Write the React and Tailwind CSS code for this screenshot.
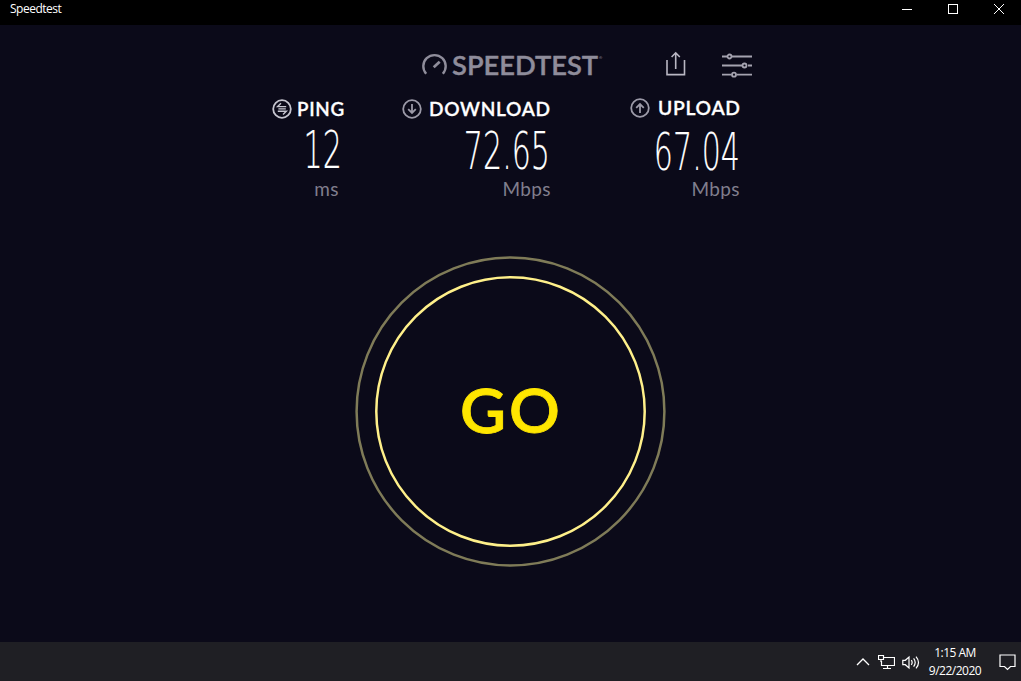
import React from 'react';

const stats = [
  {
    label: 'PING', value: '12', unit: 'ms', icon: 'ping',
    box: 'w-[72px]',
    gap: 'gap-[5px]',
    labelBox: 'w-[47px]',
    labelText: 'scale-x-[0.99]',
    valueText: 'pr-[2px] pt-[6px]',
    unitText: 'pr-[5px]',
    row: 'pt-px',
  },
  {
    label: 'DOWNLOAD', value: '72.65', unit: 'Mbps', icon: 'down',
    box: 'ml-[58px] w-[149px]',
    gap: 'gap-[7px]',
    labelBox: 'w-[121px]',
    labelText: 'scale-x-[1.005]',
    valueText: 'pr-px pt-[7px]',
    unitText: 'pr-0',
    row: 'pt-px',
  },
  {
    label: 'UPLOAD', value: '67.04', unit: 'Mbps', icon: 'up',
    box: 'ml-[79px] w-[110px]',
    gap: 'gap-[8px]',
    labelBox: 'w-[82px]',
    labelText: 'scale-x-[1.015]',
    valueText: 'pt-[8px]',
    unitText: '',
    row: 'pt-0',
  },
];

function StatIcon({ type }) {
  return (
    <svg
      className={`shrink-0 ${type === 'ping' ? 'text-[#c6c5cf]' : 'text-[#9c9aa8]'}`}
      width="20" height="20" viewBox="0 0 20 20" fill="none" stroke="currentColor" strokeWidth="1.8"
    >
      <circle cx="10" cy="10" r="8.8" />
      {type === 'ping' && <path d="M9 4.2 5.6 7.6h8.6M5.8 12.2h8.6L11 15.6M6.4 9.9h7.4" strokeWidth="1.4" />}
      {type === 'down' && <path d="M10 5v9M6.2 10.2 10 14l3.8-3.8" />}
      {type === 'up' && <path d="M10 15V6M6.2 9.8 10 6l3.8 3.8" />}
    </svg>
  );
}

function Stat({ stat }) {
  return (
    <div className={`flex flex-col ${stat.box}`}>
      <div className={`flex h-[22px] items-start ${stat.row}`}>
        <div className={`flex items-start ${stat.gap}`}>
          <StatIcon type={stat.icon} />
          <div className={`h-5 ${stat.labelBox}`}>
            <span className={`block w-max origin-left font-[Lato,sans-serif] text-[19px] leading-[19px] font-semibold tracking-[0.7px] text-white [-webkit-text-stroke:0.3px_white] ${stat.labelText}`}>
              {stat.label}
            </span>
          </div>
        </div>
      </div>
      <div className={`flex h-[59px] justify-end ${stat.valueText}`}>
        <span className="block h-max w-max origin-right scale-x-[0.59] font-['DejaVu_Sans',sans-serif] text-[51px] leading-[49px] font-extralight text-white [-webkit-text-stroke:0.2px_white]">
          {stat.value}
        </span>
      </div>
      <div className={`flex justify-end ${stat.unitText}`}>
        <span className="block font-[Lato,sans-serif] text-[19px] leading-5 tracking-[0.4px] text-[#807e8d]">
          {stat.unit}
        </span>
      </div>
    </div>
  );
}

function TitleBar() {
  return (
    <header className="flex h-[25px] justify-between bg-black text-white">
      <span className="pt-px pl-[10px] font-['Open_Sans',sans-serif] text-[12px] leading-4 tracking-[-0.5px]">Speedtest</span>
      <div className="flex pt-1 pr-4">
        <svg width="104" height="11" viewBox="0 0 104 11" fill="none" stroke="white" shapeRendering="crispEdges">
          <path d="M1 5.5h10" />
          <rect x="47.5" y=".5" width="9" height="9" />
          <path d="m93 0 10 10M103 0 93 10" shapeRendering="auto" />
        </svg>
      </div>
    </header>
  );
}

function Toolbar() {
  return (
    <div className="flex h-[73px] pt-[26px] pl-[421px] text-[#8f8d9b]">
      <svg className="mt-[2px] shrink-0" width="27" height="23" viewBox="0 0 27 23" fill="none" stroke="currentColor" strokeWidth="2.4">
        <path d="M5.2 20.8A11.2 11.2 0 1 1 21.8 20.8" />
        <path d="m12.7 14.2 6-5.4" strokeWidth="2.8" />
      </svg>
      <div className="ml-[4px] flex w-[150px]">
        <div className="w-[147px] shrink-0">
          <span className="block w-max origin-left scale-x-[1.05] font-[Lato,sans-serif] text-[26px] leading-[28px] font-semibold [-webkit-text-stroke:0.4px_#8f8d9b]">SPEEDTEST</span>
        </div>
        <span className="pt-[5px] text-[4px] leading-[4px]">®</span>
      </div>
      <svg className="ml-[64px] shrink-0" width="20" height="26" viewBox="0 0 20 26" fill="none" stroke="#b9b7c3" strokeWidth="1.6">
        <path d="M1 9v14.6h17.5V9" />
        <path d="M9.7 18V2.5M5.6 6 9.7 1.8 13.8 6" />
      </svg>
      <svg className="mt-[2px] ml-[35px] shrink-0" width="32" height="25" viewBox="0 0 32 25" fill="none" stroke="#a5a3b0" strokeWidth="1.8">
        <path d="M1 3.5h5M11 3.5h20M1 12.5h20M27 12.5h4M1 21.7h9.5M15.5 21.7H31" />
        <circle cx="8.5" cy="3.5" r="2" />
        <circle cx="23.5" cy="12.5" r="2" />
        <circle cx="13" cy="21.7" r="2" />
      </svg>
    </div>
  );
}

function GoButton() {
  return (
    <button className="mx-auto mt-[55px] grid size-[311px] place-items-center rounded-full">
      <svg className="col-start-1 row-start-1" width="311" height="311" viewBox="0 0 311 311" fill="none" strokeWidth="2.5">
        <circle cx="155.5" cy="155.5" r="153.9" stroke="#7f7b58" />
        <circle cx="155.5" cy="155.5" r="134.2" stroke="#fff08a" />
      </svg>
      <span className="col-start-1 row-start-1 mb-[5px] block scale-x-[1.02] pl-[2px] font-[Lato,sans-serif] text-[62px] leading-none font-semibold tracking-[3px] text-[#ffe600] [-webkit-text-stroke:0.8px_#ffe600]">GO</span>
    </button>
  );
}

function Taskbar() {
  return (
    <footer className="flex h-[39px] items-center justify-end bg-[#1f1f24] text-white">
      <svg className="mr-2" width="14" height="8" viewBox="0 0 14 8" fill="none" stroke="currentColor" strokeWidth="1.3">
        <path d="m1 7 6-6 6 6" />
      </svg>
      <svg className="mt-px mr-[7px]" width="17" height="15" viewBox="0 0 17 15" fill="none" stroke="currentColor" strokeWidth="1.2">
        <path d="M6 2.5h10.5v8H3.5V6M9.5 10.5v3M5 13.5h8" />
        <path d="M.5.5h5v4h-5zM3 4.5V7" />
      </svg>
      <svg className="mt-px mr-2" width="18" height="15" viewBox="0 0 18 15" fill="none" stroke="currentColor" strokeWidth="1.2">
        <path d="M.8 5.3h2.5L7 2v11L3.3 9.7H.8z" />
        <path d="M9.3 5.2q1.7 2.3 0 4.6M11.6 3.4q3.2 4.1 0 8.2M14 1.6q5 5.9 0 11.8" />
      </svg>
      <div className="mr-[17px] w-[54px] text-center font-['Open_Sans',sans-serif] text-[12px] leading-[18px] tracking-[-0.5px] whitespace-nowrap">
        <div>1:15 AM</div>
        <div>9/22/2020</div>
      </div>
      <svg className="mt-[2px] mr-[5px]" width="17" height="17" viewBox="0 0 17 17" fill="none" stroke="currentColor" strokeWidth="1.2">
        <path d="M1 1h15v11.5h-4.5l-3 3-3-3H1z" />
      </svg>
    </footer>
  );
}

function App() {
  return (
    <div className="flex h-screen w-full flex-col overflow-hidden bg-[#0b0a19] antialiased">
      <TitleBar />
      <main className="flex-1">
        <Toolbar />
        <section className="flex h-[103px] pl-[272px]">
          {stats.map((stat) => (
            <Stat key={stat.label} stat={stat} />
          ))}
        </section>
        <GoButton />
      </main>
      <Taskbar />
    </div>
  );
}

export default App;
